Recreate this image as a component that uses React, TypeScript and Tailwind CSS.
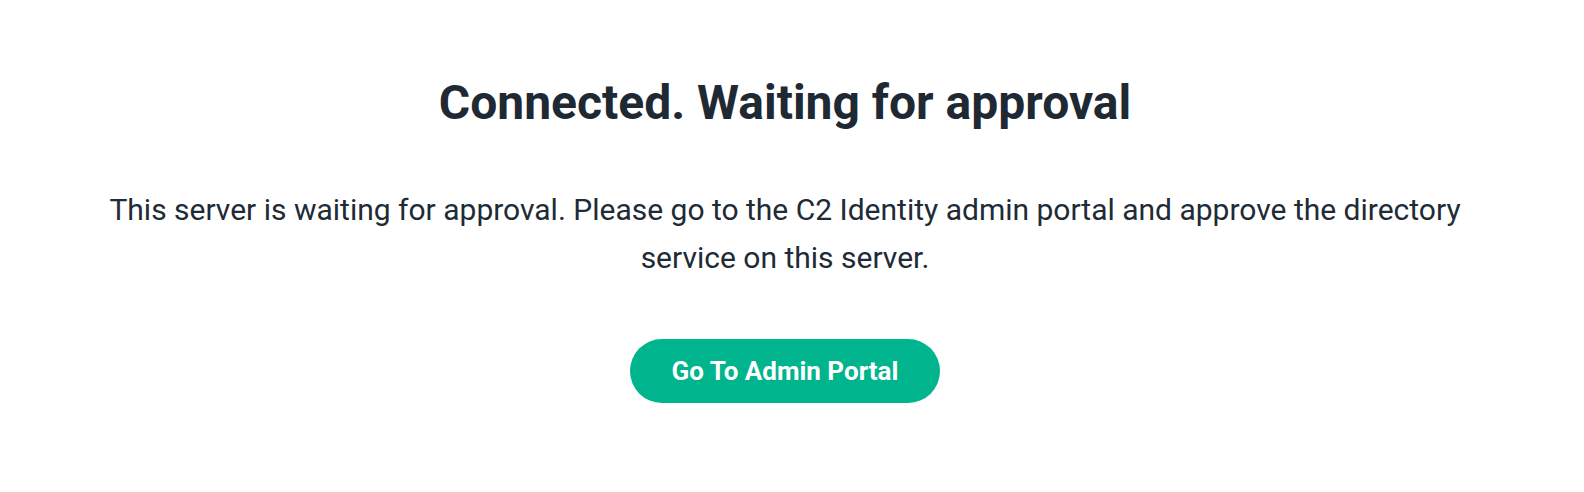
import React from "react";

export default function App() {
  return (
    <div
      className="w-[1584px] h-[492px] bg-white pr-[14px]"
      style={{ fontFamily: "Roboto, 'Noto Sans', sans-serif" }}
    >
      <div className="flex flex-col items-center pt-[76px]">
        <h1 className="text-[48px] leading-[53px] font-bold text-[#1f2933] text-center">
          Connected. Waiting for approval
        </h1>
        <p className="mt-[57px] w-[1410px] text-center text-[30px] leading-[48px] text-[#212b36]">
          This server is waiting for approval. Please go to the C2 Identity admin portal and approve the directory service on this server.
        </p>
        <button className="mt-[57px] h-[64px] w-[310px] rounded-full bg-[#00b48e] text-white text-[26px] font-bold flex items-center justify-center">
          Go To Admin Portal
        </button>
      </div>
    </div>
  );
}
